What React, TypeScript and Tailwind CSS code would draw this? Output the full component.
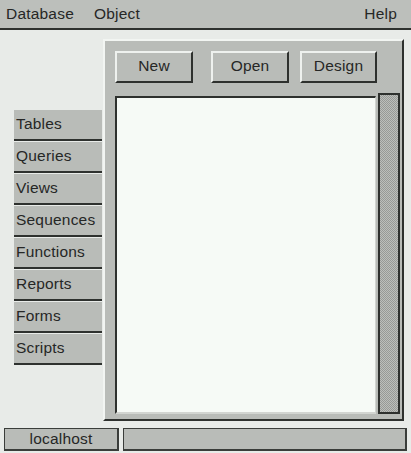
const tabs = ["Tables", "Queries", "Views", "Sequences", "Functions", "Reports", "Forms", "Scripts"];

function RaisedButton({ label, className }: { label: string; className?: string }) {
  return (
    <div
      className={`flex h-[32px] items-center justify-center border-t-2 border-l-2 border-b-2 border-r-2 border-t-[#eef1ee] border-l-[#eef1ee] border-b-[#2e312e] border-r-[#2e312e] bg-[#b9bcb8] pb-[3px] ${className ?? ""}`}
    >
      {label}
    </div>
  );
}

export default function App() {
  return (
    <div className="flex h-[453px] w-[411px] flex-col bg-[#e8ebe8] font-['Liberation_Sans',Arial,sans-serif] text-[15.5px] leading-none tracking-[0.2px] text-[#262726]">
      <div className="flex h-[30px] items-center border-b-2 border-[#2e312e] bg-[#bcbfbb] pl-[6px] pr-[14px]">
        <span>Database</span>
        <span className="ml-[20px]">Object</span>
        <span className="ml-auto">Help</span>
      </div>

      <div className="flex pt-[9px] pl-[14px]">
        <div className="mt-[70px] flex w-[88px] flex-col">
          {tabs.map((t) => (
            <div
              key={t}
              className="flex h-[32px] items-center border-t border-b-2 border-t-[#e8ebe8] border-b-[#2e312e] bg-[#b9bcb8] pb-[2px] pl-[2px]"
            >
              {t}
            </div>
          ))}
        </div>

        <div className="ml-[1px] flex h-[382px] w-[301px] flex-col border-t-2 border-l-2 border-b-2 border-r-2 border-t-[#f2f5f2] border-l-[#f2f5f2] border-b-[#2e312e] border-r-[#2e312e] bg-[#b9bcb8] pl-[10px] pr-[2px]">
          <div className="mt-[10px] flex">
            <RaisedButton label="New" className="w-[78px]" />
            <RaisedButton label="Open" className="ml-[18px] w-[78px]" />
            <RaisedButton label="Design" className="ml-[11px] w-[77px]" />
          </div>
          <div className="mt-[10px] flex h-[321px]">
            <div className="mt-[3px] flex-1 border-t-2 border-l-2 border-b-2 border-r border-t-[#2e312e] border-l-[#2e312e] border-b-[#d2d5d1] border-r-[#d2d5d1] bg-[#f6faf6]" />
            <div className="ml-[2px] w-[22px] border-2 border-[#2e312e] bg-[repeating-conic-gradient(#979996_0_25%,#bcbfbb_0_50%)] bg-[length:2px_2px]" />
          </div>
        </div>
      </div>

      <div className="mt-[7px] flex h-[23px] gap-[4px] px-[4px]">
        <div className="flex w-[115px] items-center justify-center border-2 border-t border-l border-[#3a3d3a] bg-[#b9bcb8]">
          localhost
        </div>
        <div className="flex-1 border-2 border-t border-l border-[#3a3d3a] bg-[#b9bcb8]" />
      </div>
    </div>
  );
}
